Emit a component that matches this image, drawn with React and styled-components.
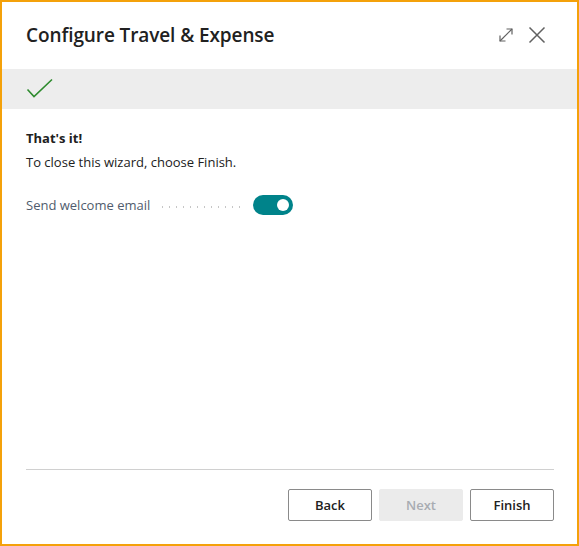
import React, { useState } from "react";
import styled, { createGlobalStyle } from "styled-components";

const GlobalStyle = createGlobalStyle`
  html, body {
    margin: 0;
    padding: 0;
    background: #fff;
  }
  * {
    box-sizing: border-box;
  }
`;

const Dialog = styled.div`
  width: 579px;
  height: 546px;
  border: 2px solid #f4a10a;
  background: #fff;
  display: flex;
  flex-direction: column;
  font-family: "Open Sans", "Noto Sans", sans-serif;
  color: #212121;
`;

const Header = styled.div`
  display: flex;
  align-items: center;
  justify-content: space-between;
  height: 67px;
  padding: 0 30px 2px 24px;
`;

const Title = styled.h1`
  margin: 0;
  font-size: 19px;
  font-weight: 600;
  letter-spacing: -0.1px;
  color: #212121;
`;

const HeaderActions = styled.div`
  display: flex;
  align-items: center;
  gap: 11px;
`;

const IconButton = styled.button`
  border: none;
  background: none;
  padding: 0;
  width: 20px;
  height: 20px;
  display: flex;
  align-items: center;
  justify-content: center;
  cursor: pointer;
`;

const StepBand = styled.div`
  height: 40px;
  background: #ededed;
  display: flex;
  align-items: center;
  padding-left: 24px;
`;

const Body = styled.div`
  flex: 1;
  padding: 20px 24px 0;
`;

const Heading = styled.div`
  font-size: 13px;
  font-weight: 700;
  color: #212121;
  margin-bottom: 6px;
`;

const Text = styled.div`
  font-size: 13px;
  color: #212121;
`;

const FieldRow = styled.div`
  display: flex;
  align-items: center;
  margin-top: 24px;
`;

const FieldLabel = styled.span`
  font-size: 13px;
  color: #505c6d;
  white-space: nowrap;
`;

const Leader = styled.span`
  width: 86px;
  height: 2px;
  margin: 3px 8px 0 9px;
  background-image: radial-gradient(circle, #c6c6c6 0.8px, transparent 1px);
  background-size: 7px 2px;
  background-repeat: repeat-x;
`;

const Toggle = styled.button`
  width: 40px;
  height: 20px;
  border-radius: 10px;
  border: none;
  padding: 0 4px;
  background: ${(p) => (p.on ? "#00838a" : "#c8c8c8")};
  display: flex;
  align-items: center;
  justify-content: ${(p) => (p.on ? "flex-end" : "flex-start")};
  cursor: pointer;
`;

const Knob = styled.span`
  width: 12px;
  height: 12px;
  border-radius: 50%;
  background: #fff;
`;

const Footer = styled.div`
  margin: 0 23px 0 24px;
  border-top: 1px solid #d0d0d0;
  padding: 19px 0 23px;
  display: flex;
  justify-content: flex-end;
  gap: 7px;
`;

const Button = styled.button`
  width: 84px;
  height: 32px;
  border-radius: 2px;
  font-family: "Open Sans", "Noto Sans", sans-serif;
  font-size: 13px;
  font-weight: 600;
  border: 1px solid ${(p) => (p.disabled ? "#ebebeb" : "#8a8a8a")};
  background: ${(p) => (p.disabled ? "#ebebeb" : "#fff")};
  color: ${(p) => (p.disabled ? "#a8acb2" : "#212121")};
  cursor: ${(p) => (p.disabled ? "default" : "pointer")};
`;

const App = () => {
  const [sendEmail, setSendEmail] = useState(true);
  return (
    <>
      <GlobalStyle />
      <Dialog>
        <Header>
          <Title>Configure Travel &amp; Expense</Title>
          <HeaderActions>
            <IconButton aria-label="Expand">
              <svg width="16" height="16" viewBox="0 0 16 16" fill="none" stroke="#616161" strokeWidth="1.2">
                <path d="M2 14L14 2" />
                <path d="M8.5 2H14V7.5" />
                <path d="M2 8.5V14H7.5" />
              </svg>
            </IconButton>
            <IconButton aria-label="Close">
              <svg width="18" height="18" viewBox="0 0 18 18" fill="none" stroke="#616161" strokeWidth="1.5">
                <path d="M1.5 1.5L16.5 16.5M16.5 1.5L1.5 16.5" />
              </svg>
            </IconButton>
          </HeaderActions>
        </Header>
        <StepBand>
          <svg width="28" height="22" viewBox="0 0 28 22" fill="none" stroke="#2e8b2e" strokeWidth="1.6">
            <path d="M1.5 11.5L8 18.5L26 1.5" />
          </svg>
        </StepBand>
        <Body>
          <Heading>That's it!</Heading>
          <Text>To close this wizard, choose Finish.</Text>
          <FieldRow>
            <FieldLabel>Send welcome email</FieldLabel>
            <Leader />
            <Toggle on={sendEmail} onClick={() => setSendEmail(!sendEmail)} aria-label="Send welcome email">
              <Knob />
            </Toggle>
          </FieldRow>
        </Body>
        <Footer>
          <Button>Back</Button>
          <Button disabled>Next</Button>
          <Button>Finish</Button>
        </Footer>
      </Dialog>
    </>
  );
};

export default App;
